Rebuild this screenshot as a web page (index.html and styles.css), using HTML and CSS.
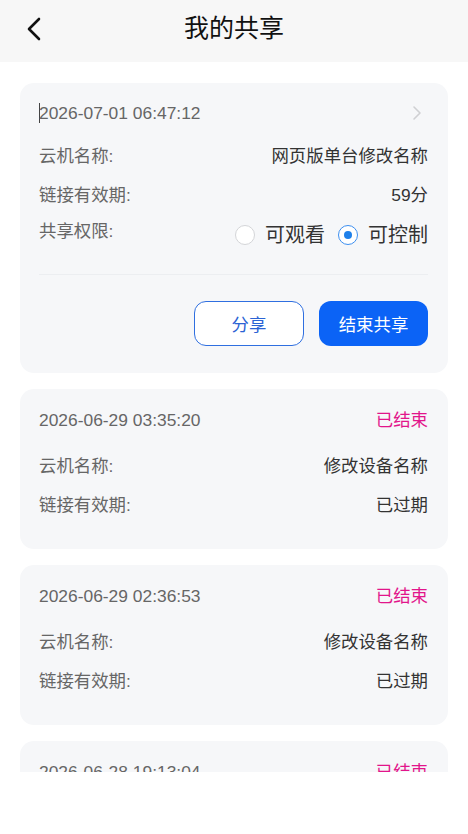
FILE: index.html
```html
<!DOCTYPE html>
<html lang="zh-CN">
<head>
<meta charset="utf-8">
<title>我的共享</title>
<link rel="stylesheet" href="styles.css">
</head>
<body>
<div class="page">
  <header class="topbar">
    <span class="back">
      <svg width="16" height="26" viewBox="0 0 16 26"><path d="M13 3 L3 13 L13 23" fill="none" stroke="#111" stroke-width="2.6" stroke-linecap="round" stroke-linejoin="round"/></svg>
    </span>
    <h1 class="title">我的共享</h1>
  </header>
  <main class="list">
    <section class="card card-active">
      <div class="card-head">
        <span class="date"><span class="caret"></span>2026-07-01 06:47:12</span>
        <svg class="arrow" width="10" height="16" viewBox="0 0 10 16"><path d="M2 2 L8 8 L2 14" fill="none" stroke="#cfd0d3" stroke-width="1.6" stroke-linecap="round" stroke-linejoin="round"/></svg>
      </div>
      <div class="row"><span class="label">云机名称:</span><span class="value">网页版单台修改名称</span></div>
      <div class="row"><span class="label">链接有效期:</span><span class="value">59分</span></div>
      <div class="row row-perm">
        <span class="label label-perm">共享权限:</span>
        <div class="radios">
          <span class="radio"><span class="dot"></span><span class="radio-text">可观看</span></span>
          <span class="radio checked"><span class="dot"></span><span class="radio-text">可控制</span></span>
        </div>
      </div>
      <div class="divider"></div>
      <div class="actions">
        <button class="btn btn-outline">分享</button>
        <button class="btn btn-primary">结束共享</button>
      </div>
    </section>

    <section class="card">
      <div class="card-head">
        <span class="date">2026-06-29 03:35:20</span>
        <span class="status">已结束</span>
      </div>
      <div class="row"><span class="label">云机名称:</span><span class="value">修改设备名称</span></div>
      <div class="row"><span class="label">链接有效期:</span><span class="value">已过期</span></div>
    </section>

    <section class="card">
      <div class="card-head">
        <span class="date">2026-06-29 02:36:53</span>
        <span class="status">已结束</span>
      </div>
      <div class="row"><span class="label">云机名称:</span><span class="value">修改设备名称</span></div>
      <div class="row"><span class="label">链接有效期:</span><span class="value">已过期</span></div>
    </section>

    <section class="card">
      <div class="card-head">
        <span class="date">2026-06-28 19:13:04</span>
        <span class="status">已结束</span>
      </div>
      <div class="row"><span class="label">云机名称:</span><span class="value">修改设备名称</span></div>
      <div class="row"><span class="label">链接有效期:</span><span class="value">已过期</span></div>
    </section>
  </main>
</div>
</body>
</html>
```

FILE: styles.css
```css
* { box-sizing: border-box; }
html, body { margin: 0; padding: 0; background: #ffffff; }
body {
  font-family: "Liberation Sans", "Noto Sans CJK SC", sans-serif;
  color: #333;
}
.page { width: 468px; height: 834px; background: #fff; }

.topbar {
  height: 62px;
  background: #f7f7f7;
  display: flex;
  align-items: center;
  justify-content: center;
  position: relative;
}
.back {
  position: absolute;
  left: 26px;
  top: 16px;
  width: 16px;
  height: 26px;
  display: flex;
}
.title {
  margin: 0;
  font-size: 25px;
  font-weight: 400;
  color: #111;
  line-height: 30px;
  margin-top: -6px;
}

.list {
  height: 710px;
  overflow: hidden;
  padding: 21px 20px 0 20px;
  display: flex;
  flex-direction: column;
  gap: 16px;
}
.card {
  flex: none;
  background: #f6f7f9;
  border-radius: 14px;
  padding: 13px 20px 25px 19px;
}
.card-active { padding-top: 12px; padding-bottom: 27px; }

.card-head {
  height: 36px;
  display: flex;
  align-items: center;
  justify-content: space-between;
  margin-bottom: 8px;
}
.card-active .card-head { margin-bottom: 5px; }
.date {
  font-size: 17.4px;
  color: #666;
  line-height: 22px;
  display: flex;
  align-items: center;
}
.caret {
  display: inline-block;
  width: 1px;
  height: 20px;
  background: #444;
  margin-right: -1px;
}
.arrow { margin-right: 6px; }
.status {
  font-size: 17.4px;
  color: #e2158b;
  line-height: 22px;
}

.row {
  height: 39px;
  display: flex;
  align-items: center;
  justify-content: space-between;
}
.label {
  font-size: 17.4px;
  color: #666;
  line-height: 22px;
}
.value {
  font-size: 17.4px;
  color: #333;
  line-height: 22px;
}
.row-perm { padding-top: 3px; }
.label-perm { margin-bottom: 9px; }

.radios {
  display: flex;
  align-items: center;
  gap: 13px;
}
.radio {
  display: flex;
  align-items: center;
  gap: 10px;
}
.dot {
  width: 20px;
  height: 20px;
  border-radius: 50%;
  border: 1.5px solid #d4d5d8;
  background: #fff;
  display: flex;
  align-items: center;
  justify-content: center;
}
.radio.checked .dot { border-color: #3d8ff0; }
.radio.checked .dot::after {
  content: "";
  width: 8px;
  height: 8px;
  border-radius: 50%;
  background: #1f80ea;
}
.radio-text {
  font-size: 20px;
  color: #333;
  line-height: 24px;
}

.divider {
  height: 1px;
  background: #eceef1;
  margin-top: 21px;
}
.actions {
  display: flex;
  justify-content: flex-end;
  gap: 15px;
  margin-top: 26px;
}
.btn {
  height: 45px;
  border-radius: 12px;
  font-family: "Liberation Sans", "Noto Sans CJK SC", sans-serif;
  font-size: 17.4px;
  padding: 0;
  cursor: pointer;
}
.btn-outline {
  width: 110px;
  background: #fff;
  border: 1px solid #2f6fe0;
  color: #2b63d4;
}
.btn-primary {
  width: 109px;
  background: #0b63f6;
  border: none;
  color: #fff;
}
```
